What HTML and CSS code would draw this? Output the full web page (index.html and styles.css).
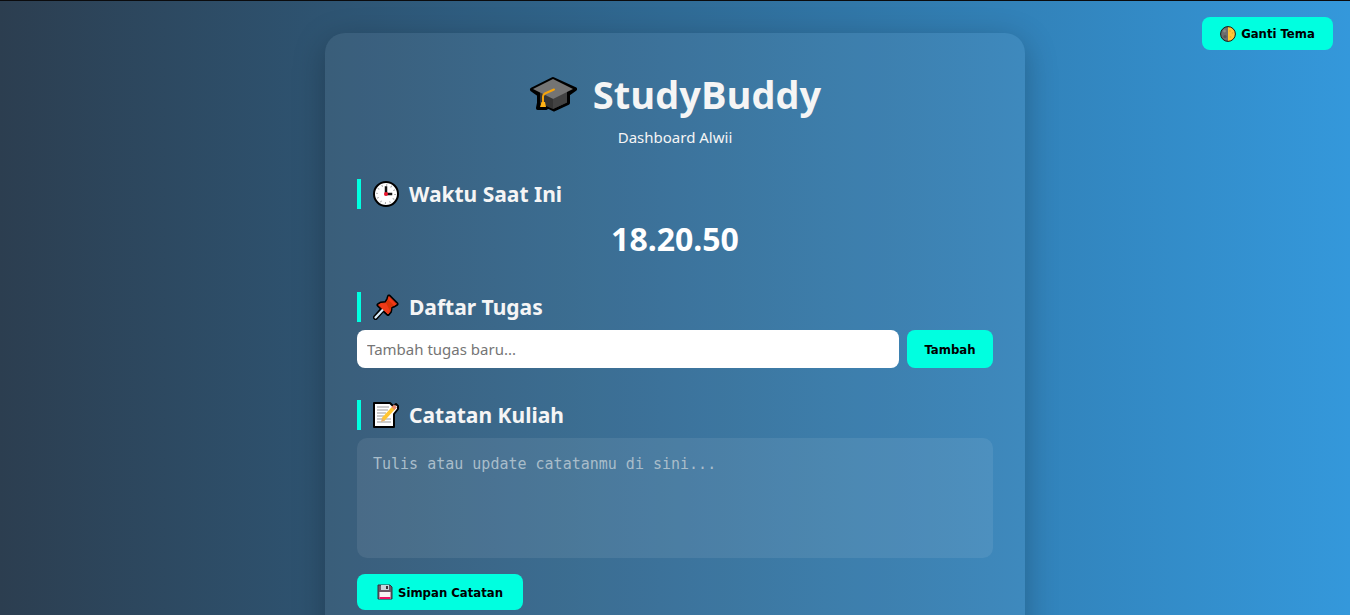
FILE: index.html
```html
<!DOCTYPE html>
<html lang="id">
<head>
<meta charset="utf-8">
<meta name="viewport" content="width=device-width, initial-scale=1">
<title>StudyBuddy</title>
<link rel="stylesheet" href="styles.css">
</head>
<body>
<button type="button" class="btn theme-toggle">
  <svg class="icon-small" viewBox="0 0 16 16" aria-hidden="true">
    <circle cx="8" cy="8" r="7.400" fill="#6d6d6d"/>
    <path d="M8 .6a7.400 7.400 0 0 1 0 14.800z" fill="#ffc534"/>
    <circle cx="4.500" cy="5" r="1.400" fill="#8b8b86"/><circle cx="5" cy="10.500" r="1.600" fill="#555"/>
    <circle cx="10" cy="5" r=".8" fill="#e3a62a"/><circle cx="12.500" cy="7" r=".8" fill="#e3a62a"/><circle cx="10.500" cy="11" r=".8" fill="#e3a62a"/>
    <circle cx="8" cy="8" r="7.400" fill="none" stroke="#1c1c16" stroke-width="1"/>
  </svg>
  <span>Ganti Tema</span>
</button>
<main class="card">
  <header class="header">
    <h1 class="title">
      <svg class="icon-cap" viewBox="0 0 48 36" aria-hidden="true">
        <path d="M24 3L3 13.500l7 5V27l-1 5h8l1-2 7 3.500 14-6.500v-9l7-5z" fill="#000" stroke="#000" stroke-width="4" stroke-linejoin="round"/>
        <path d="M11 16v11.500L24 33l14-6.500V16L24 23z" fill="#343434"/>
        <path d="M24 22v11l14-6.500V15z" fill="#424242"/>
        <path d="M24 3L4 13l20 10 20-10z" fill="#747474"/>
        <path d="M25 13.500l-9 4c-1.500.8-2 1.500-2 3v7" fill="none" stroke="#f5a30a" stroke-width="2" stroke-linecap="round"/>
        <path d="M12.500 26h3.500l1 5h-6z" fill="#ffb316"/>
      </svg>
      <span>StudyBuddy</span>
    </h1>
    <p class="subtitle">Dashboard Alwii</p>
  </header>

  <section class="section">
    <h2 class="heading">
      <svg class="icon" viewBox="0 0 26 26" aria-hidden="true">
        <circle cx="13" cy="13" r="12" fill="#fff" stroke="#000" stroke-width="2"/>
        <circle cx="13" cy="13" r="9" fill="none" stroke="#aaa" stroke-width="2" stroke-dasharray="1 3.712"/>
        <path d="M13 13V6.500M13 13h5" stroke="#111" stroke-width="2.500" stroke-linecap="square"/>
        <circle cx="13" cy="13" r="2" fill="#f0142c"/>
      </svg>
      <span>Waktu Saat Ini</span>
    </h2>
    <p class="clock">18.20.50</p>
  </section>

  <section class="section">
    <h2 class="heading">
      <svg class="icon" viewBox="0 0 26 26" aria-hidden="true">
        <path d="M2.500 23.500L10 15" stroke="#000" stroke-width="5" stroke-linecap="round"/>
        <path d="M16 2.500L23.500 10l-2.500 1.500-3 1-1 5-2 2.500L5.500 11l2.500-1.500 5-.5 2-3.500z" fill="#000" stroke="#000" stroke-width="4" stroke-linejoin="round"/>
        <path d="M2.500 23.500l8-8.500" stroke="#d8edfa" stroke-width="2.200" stroke-linecap="round"/>
        <path d="M16 2.500L23.500 10l-2.500 1.500-3 1-1 5-2 2.500L5.500 11l2.500-1.500 5-.5 2-3.500z" fill="#f03a17" stroke="#f03a17" stroke-width="1"/>
        <path d="M13 9l2-3.500 6 6-3 1-1 4.500z" fill="#d63408"/>
      </svg>
      <span>Daftar Tugas</span>
    </h2>
    <form class="task-form">
      <input class="task-input" type="text" placeholder="Tambah tugas baru..." aria-label="Tugas baru">
      <button type="button" class="btn btn-add">Tambah</button>
    </form>
  </section>

  <section class="section">
    <h2 class="heading">
      <svg class="icon" viewBox="0 0 26 26" aria-hidden="true">
        <path d="M1 1h16l3 3 3-2 2 2v3l-4 5v13H1z" fill="#fff" stroke="#000" stroke-width="2" stroke-linejoin="round"/>
        <path d="M4 5h12M4 8h11M4 11h9M4 14h7M4 17h5M12 17h6M4 20h14" stroke="#999" stroke-width="1"/>
        <path d="M10 17.500L20.500 6" stroke="#ffc530" stroke-width="4"/>
        <path d="M8 20l1-4 3 2.500z" fill="#e8b36c"/>
        <path d="M20 6.500l2.500-2.500" stroke="#e98a6d" stroke-width="4"/>
      </svg>
      <span>Catatan Kuliah</span>
    </h2>
    <textarea class="notes" placeholder="Tulis atau update catatanmu di sini..." aria-label="Catatan kuliah"></textarea>
    <button type="button" class="btn btn-save">
      <svg class="icon-small" viewBox="0 0 16 16" aria-hidden="true">
        <path d="M1 1h12l2 2v12H1z" fill="#6b5967" stroke="#33303c" stroke-width="1"/>
        <path d="M4 1h8v5H4z" fill="#c9d6dc"/><path d="M9 2h2v3H9z" fill="#333"/>
        <path d="M2.500 8h11v7h-11z" fill="#f8f5f7"/><path d="M2.500 13h11v2h-11z" fill="#f01466"/>
      </svg>
      <span>Simpan Catatan</span>
    </button>
  </section>
</main>
</body>
</html>
```
FILE: styles.css
```css
* {
  box-sizing: border-box;
}

body {
  margin: 0;
  height: 100vh;
  padding: 32px 16px;
  overflow: hidden;
  border-top: 1px solid #0b0b0d;
  background: linear-gradient(to right, #2c3e50, #3498db) border-box;
  color: #f5f5f5;
  font-family: "Noto Sans", "Open Sans", sans-serif;
  font-size: 16px;
}

h1, h2, p {
  margin: 0;
}

.card {
  max-width: 700px;
  margin: 0 auto;
  padding: 32px;
  border-radius: 20px;
  background: rgba(255, 255, 255, 0.06);
  box-shadow: 0 8px 32px rgba(0, 0, 0, 0.25);
}

.header {
  margin-bottom: 30px;
  text-align: center;
}

.title {
  display: flex;
  justify-content: center;
  align-items: center;
  gap: 16px;
  font-size: 38px;
  line-height: 58px;
  font-family: "Open Sans", sans-serif;
}

.subtitle {
  margin-top: 2px;
  line-height: 24px;
  font-size: 15px;
}

.section {
  margin-bottom: 32px;
}

.heading {
  display: flex;
  align-items: center;
  gap: 10px;
  margin-bottom: 8px;
  padding-left: 12px;
  border-left: 4px solid #00ffe0;
  font-size: 21px;
  line-height: 30px;
}

.clock {
  color: #fff;
  font-size: 32px;
  font-weight: 700;
  line-height: 43px;
  text-align: center;
}

.task-form {
  display: flex;
  gap: 8px;
}

.task-input {
  flex: 1;
  min-width: 0;
  height: 38px;
  padding: 0 10px;
  border: 0;
  border-radius: 8px;
  background: #fff;
  font: 15px "Noto Sans", sans-serif;
}

.task-input::placeholder {
  color: #757575;
}

.notes {
  display: block;
  width: 100%;
  height: 120px;
  margin-bottom: 16px;
  padding: 16px;
  resize: none;
  border: 0;
  border-radius: 10px;
  background: rgba(255, 255, 255, 0.08);
  color: #f5f5f5;
  font: 15px/20px "DejaVu Sans Mono", monospace;
}

.notes::placeholder {
  color: #a9bdca;
}

.btn {
  display: inline-flex;
  align-items: center;
  justify-content: center;
  gap: 5px;
  padding: 8px 16px;
  border: 0;
  border-radius: 8px;
  background: #00ffe0;
  color: #000;
  font: 700 13px/17px "DejaVu Sans Condensed", "DejaVu Sans", sans-serif;
}

.btn-add {
  min-width: 86px;
}

.btn-save {
  height: 36px;
  padding: 8px 20px;
}

.theme-toggle {
  position: absolute;
  top: 17px;
  right: 17px;
  min-width: 131px;
}

.icon-small {
  width: 16px;
  height: 16px;
}

.icon {
  width: 26px;
  height: 26px;
}

.icon-cap {
  width: 48px;
  height: 36px;
}
```
